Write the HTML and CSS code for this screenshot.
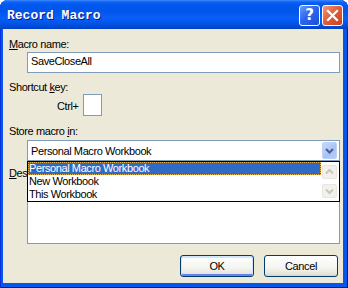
FILE: index.html
```html
<!DOCTYPE html>
<html lang="en">
<head>
    <meta charset="UTF-8">
    <title>Record Macro</title>
    <link rel="stylesheet" href="styles.css">
</head>
<body>

    <div class="window">
        <div class="titlebar">
            <span class="title">Record Macro</span>
            <div class="caption-buttons">
                <span class="cap-btn help">?</span>
                <span class="cap-btn close">
                    <svg width="21" height="21" viewBox="0 0 21 21">
                        <path d="M6 6 L15 15 M15 6 L6 15" stroke="#fff" stroke-width="2.2" stroke-linecap="square"/>
                    </svg>
                </span>
            </div>
        </div>

        <div class="dialog">
            <div class="label"><u>M</u>acro name:</div>
            <div class="field text-field">SaveCloseAll</div>

            <div class="label section">Shortcut <u>k</u>ey:</div>
            <div class="shortcut-row">
                <span class="ctrl">Ctrl+</span>
                <span class="key-box"></span>
            </div>

            <div class="label section-store">Store macro <u>i</u>n:</div>
            <div class="combo-wrap">
                <div class="field combo">
                    <span class="combo-text">Personal Macro Workbook</span>
                    <span class="combo-btn">
                        <svg width="15" height="17" viewBox="0 0 15 17">
                            <path d="M4 7 L7.5 10.5 L11 7" fill="none" stroke="#4d6185" stroke-width="2"/>
                        </svg>
                    </span>
                </div>
                <!-- open drop-down list lies over the description label -->
                <div class="dropdown">
                    <div class="rows">
                        <div class="row selected">Personal Macro Workbook</div>
                        <div class="row">New Workbook</div>
                        <div class="row">This Workbook</div>
                    </div>
                    <div class="scrollbar">
                        <span class="scroll-btn">
                            <svg width="13" height="12" viewBox="0 0 13 12">
                                <path d="M3 7.5 L6.5 4 L10 7.5" fill="none" stroke="#c9c7ba" stroke-width="2"/>
                            </svg>
                        </span>
                        <span class="scroll-btn">
                            <svg width="13" height="12" viewBox="0 0 13 12">
                                <path d="M3 4.5 L6.5 8 L10 4.5" fill="none" stroke="#c9c7ba" stroke-width="2"/>
                            </svg>
                        </span>
                    </div>
                </div>
            </div>

            <div class="label section-desc"><u>D</u>escription:</div>
            <div class="field memo"></div>

            <div class="buttons">
                <button class="btn default">OK</button>
                <button class="btn">Cancel</button>
            </div>
        </div>
    </div>

</body>
</html>
```

FILE: styles.css
```css
body {
    margin: 0;
    background-color: #ffffff;
    font-family: 'Liberation Sans', Arial, sans-serif;
    font-size: 11px;
    color: #000;
}
.window {
    width: 348px;
    height: 288px;
    box-sizing: border-box;
    background-color: #0756ec;
    border-radius: 8px 8px 0 0;
    overflow: hidden;
    box-shadow: inset 1px 0 #0831d9, inset -1px 0 #001ea0, inset 0 -1px #001ea0;
}
.titlebar {
    height: 29px;
    display: flex;
    justify-content: space-between;
    background: linear-gradient(to bottom, #3d8afb 0, #0f63f6 2px, #0058ee 5px, #0055ea 11px, #0a5ffa 18px, #0053e4 24px, #0046cc 28px, #003db8 29px);
}
.title {
    padding: 2px 0 0 7px;
    line-height: 27px;
    font-family: 'Liberation Mono', monospace;
    font-weight: bold;
    font-size: 13px;
    color: #ffffff;
    text-shadow: 1px 1px #0a1883;
}
.caption-buttons {
    display: flex;
    gap: 2px;
    padding: 5px 5px 0 0;
}
.cap-btn {
    width: 21px;
    height: 21px;
    box-sizing: border-box;
    border: 1px solid #ffffff;
    border-radius: 3px;
    display: flex;
    align-items: center;
    justify-content: center;
}
.help {
    background: linear-gradient(135deg, #6b9cf8 0%, #2d66ec 45%, #1a4fd8 100%);
    color: #ffffff;
    font-family: 'DejaVu Sans', sans-serif;
    font-weight: bold;
    font-size: 15px;
    line-height: 19px;
}
.close {
    background: linear-gradient(135deg, #f19a7c 0%, #e0603c 45%, #c8401c 100%);
}
.close svg {
    margin: -1px;
}

/* dialog body */
.dialog {
    margin: 0 5px 0 3px;
    height: 254px;
    box-sizing: border-box;
    padding: 9px 0 6px 6px;
    background-color: #ece9d8;
    display: flex;
    flex-direction: column;
    letter-spacing: -0.4px;
}
.label {
    line-height: 13px;
    height: 13px;
    margin-bottom: 1px;
}
.section {
    margin-top: 8px;
    margin-bottom: 0;
}
.section-store {
    margin-top: 9px;
    margin-bottom: 2px;
}
.section-desc {
    margin-top: 6px;
}
.field {
    margin: 0 3px 0 18px;
    height: 21px;
    box-sizing: border-box;
    border: 1px solid #7f9db9;
    background-color: #ffffff;
}
.text-field {
    padding-left: 3px;
    line-height: 17px;
}
.shortcut-row {
    height: 22px;
    display: flex;
    align-items: flex-end;
    padding-left: 48px;
}
.ctrl {
    line-height: 13px;
    margin-bottom: 3px;
}
.key-box {
    width: 19px;
    height: 22px;
    box-sizing: border-box;
    margin-left: 4px;
    border: 1px solid #7f9db9;
    background-color: #ffffff;
}
.combo-wrap {
    position: relative;
}
.combo {
    display: flex;
    align-items: center;
    justify-content: space-between;
    padding: 0 2px 0 3px;
}
.combo-btn {
    width: 15px;
    height: 17px;
    box-sizing: border-box;
    border: 1px solid #b9d0f7;
    border-radius: 2px;
    background: linear-gradient(135deg, #c9d9fc 0%, #a8c2f8 60%, #b7ccf9 100%);
    display: flex;
}
.combo-btn svg {
    margin: -1px;
}
.dropdown {
    position: absolute;
    top: 21px;
    left: 18px;
    right: 3px;
    height: 41px;
    box-sizing: border-box;
    border: 1px solid #000000;
    background-color: #ffffff;
    display: flex;
}
.rows {
    flex: 1;
}
.row {
    height: 13px;
    line-height: 13px;
    padding-left: 1px;
}
.row.selected {
    background-color: #316ac5;
    color: #ffffff;
    outline: 1px dotted #e8b04a;
    outline-offset: -1px;
}
.scrollbar {
    width: 18px;
    box-sizing: border-box;
    padding: 3px 2px 0 1px;
    display: flex;
    flex-direction: column;
    gap: 5px;
}
.scroll-btn {
    width: 15px;
    height: 14px;
    box-sizing: border-box;
    border: 1px solid #e8e6de;
    border-radius: 2px;
    background-color: #f3f1ec;
    display: flex;
}
.memo {
    height: 63px;
}
.buttons {
    margin-top: 11px;
    padding-right: 5px;
    display: flex;
    justify-content: flex-end;
    gap: 10px;
}
.btn {
    width: 74px;
    height: 22px;
    padding: 0;
    border: 1px solid #003c74;
    border-radius: 3px;
    background: linear-gradient(to bottom, #ffffff 0%, #f4f4f0 60%, #e6e3d9 90%, #d6d0c5 100%);
    font-family: 'Liberation Sans', Arial, sans-serif;
    font-size: 11px;
    letter-spacing: -0.4px;
    color: #000;
}
.btn.default {
    box-shadow: inset 0 1px 0 1px #cee7ff, inset 0 -1px 0 1px #6982ee;
}
```
